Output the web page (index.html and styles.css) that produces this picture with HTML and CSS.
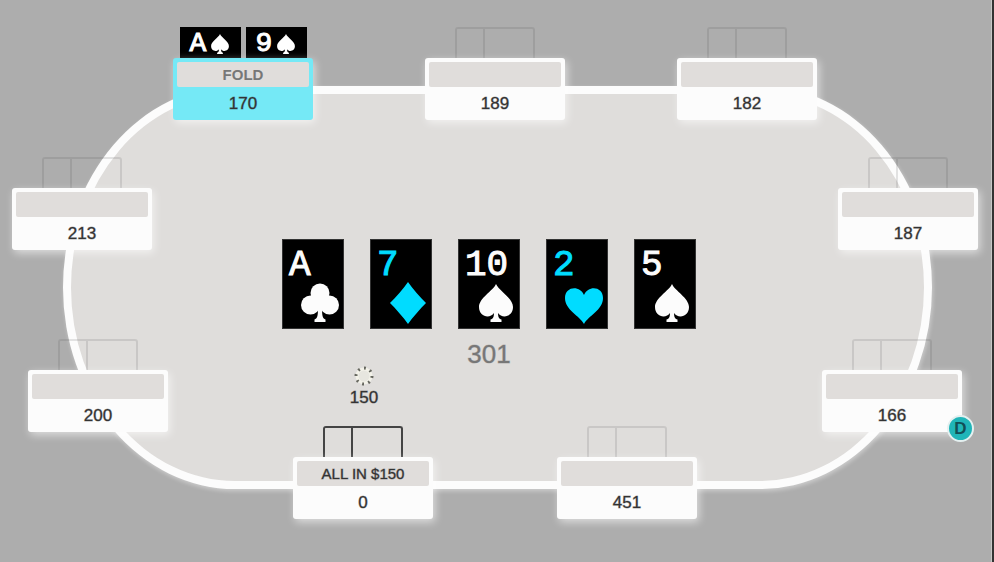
FILE: index.html
```html
<!DOCTYPE html>
<html lang="en">
<head>
<meta charset="utf-8">
<title>Poker table</title>
<link rel="stylesheet" href="styles.css">
</head>
<body>
<svg class="defs" aria-hidden="true">
  <symbol id="spade" viewBox="0 0 38 42"><path d="M19 2C16 9 2 16 2 25c0 10 11 12 15 6-.2 4-.8 6-3.500 6.500V40h11v-2.500C21.800 37 21.200 35 21 31c4 6 15 4 15-6C36 16 22 9 19 2z"/></symbol>
  <symbol id="club" viewBox="0 0 38 42"><circle cx="19" cy="11" r="9.500"/><circle cx="9.500" cy="23" r="9.500"/><circle cx="28.500" cy="23" r="9.500"/><path d="M14 15h10l-3 13c.2 6 .8 8.500 3.500 9.500V40h-11v-2.500c2.700-1 3.300-3.500 3.500-9.500z"/></symbol>
  <symbol id="diamond" viewBox="0 0 38 42"><path d="M19 0C24 7 31 15 37 21 31 27 24 35 19 42 14 35 7 27 1 21 7 15 14 7 19 0z"/></symbol>
  <symbol id="heart" viewBox="0 0 38 42"><path d="M19 42C15 34 0 28 0 16 0 4 15 3 19 13 23 3 38 4 38 16c0 12-15 18-19 26z"/></symbol>
</svg>
<main class="stage">
  <div class="felt"></div>

  <section class="row row-top">
    <article class="seat seat-active">
      <div class="hand">
        <div class="hole"><span>A</span><svg role="img" aria-label="spades"><use href="#spade"/></svg></div>
        <div class="hole"><span>9</span><svg role="img" aria-label="spades"><use href="#spade"/></svg></div>
      </div>
      <div class="panel"><div class="action">FOLD</div><div class="stack">170</div></div>
    </article>
    <article class="seat"><div class="slot"></div><div class="panel"><div class="action"></div><div class="stack">189</div></div></article>
    <article class="seat"><div class="slot"></div><div class="panel"><div class="action"></div><div class="stack">182</div></div></article>
  </section>

  <section class="middle">
    <div class="side side-left">
      <article class="seat"><div class="slot"></div><div class="panel"><div class="action"></div><div class="stack">213</div></div></article>
      <article class="seat"><div class="slot"></div><div class="panel"><div class="action"></div><div class="stack">200</div></div></article>
    </div>
    <div class="center">
      <div class="board">
        <div class="card"><span class="rank">A</span><svg class="suit" role="img" aria-label="clubs"><use href="#club"/></svg></div>
        <div class="card cyan"><span class="rank">7</span><svg class="suit" role="img" aria-label="diamonds"><use href="#diamond"/></svg></div>
        <div class="card"><span class="rank">10</span><svg class="suit" role="img" aria-label="spades"><use href="#spade"/></svg></div>
        <div class="card cyan"><span class="rank">2</span><svg class="suit" role="img" aria-label="hearts"><use href="#heart"/></svg></div>
        <div class="card"><span class="rank">5</span><svg class="suit" role="img" aria-label="spades"><use href="#spade"/></svg></div>
      </div>
      <div class="pot">301</div>
      <div class="bet">
        <svg class="chip" viewBox="0 0 20 20" aria-hidden="true"><circle class="chip-rim" cx="10" cy="10" r="7"/><circle class="chip-marks" cx="10" cy="10" r="8" pathLength="80"/></svg>
        <span>150</span>
      </div>
    </div>
    <div class="side side-right">
      <article class="seat"><div class="slot"></div><div class="panel"><div class="action"></div><div class="stack">187</div></div></article>
      <article class="seat"><div class="slot"></div><div class="panel"><div class="action"></div><div class="stack">166</div><span class="dealer">D</span></div></article>
    </div>
  </section>

  <section class="row row-bottom">
    <article class="seat seat-in"><div class="slot"></div><div class="panel"><div class="action">ALL IN $150</div><div class="stack">0</div></div></article>
    <article class="seat"><div class="slot"></div><div class="panel"><div class="action"></div><div class="stack">451</div></div></article>
  </section>
</main>
</body>
</html>
```
FILE: styles.css
```css
* { box-sizing: border-box; }

body {
  margin: 0;
  background: #adadad;
  color: #333;
  font-family: "Liberation Sans", Arial, sans-serif;
}

.defs { position: absolute; width: 0; height: 0; }

.stage {
  position: relative;
  min-height: 100vh;
  padding: 27px 14px 0 12px;
  border-right: 2px solid #333;
  box-shadow: inset -1px 0 #c8c8c8;
}

/* Table surface, drawn behind the seats */
.felt {
  position: absolute;
  top: 86px;
  left: 63px;
  right: 60px;
  height: 403px;
  border: 8px solid #fcfcfc;
  border-radius: 172px / 50%;
  background: #dfdddb;
  box-shadow: 1px 2px 4px rgba(255, 255, 255, 0.4);
}

.row, .middle { position: relative; display: flex; }
.row { justify-content: center; }
.row-top { gap: 112px; }
.row-bottom { gap: 124px; margin-top: -6px; }

.middle { justify-content: space-between; margin-top: 37px; }
.side { display: flex; flex-direction: column; gap: 89px; width: 156px; }
.side-left .seat:last-child { align-self: flex-end; }
.side-right .seat:first-child { align-self: flex-end; }

.seat { width: 140px; }

.slot {
  width: 80px;
  height: 31px;
  margin: 0 auto;
  border: 2px solid rgba(70, 70, 70, 0.14);
  border-bottom: 0;
  border-radius: 3px 3px 0 0;
}
.slot::before {
  content: "";
  display: block;
  width: 26px;
  height: 100%;
  border-right: 2px solid rgba(70, 70, 70, 0.14);
}
.seat-in .slot, .seat-in .slot::before { border-color: #444; }

.panel {
  position: relative;
  height: 62px;
  padding: 4px 4px 0;
  border-radius: 3px;
  background: #fcfcfc;
  box-shadow: 2px 3px 8px rgba(255, 255, 255, 0.6);
  text-align: center;
}
.action {
  height: 25px;
  border-radius: 2px;
  background: #e0dddb;
  font-size: 15px;
  line-height: 26px;
  -webkit-text-stroke: 1px rgba(51, 51, 51, 0.4);
}
.stack, .bet span {
  font-size: 17px;
  line-height: 34px;
  -webkit-text-stroke: 1px rgba(51, 51, 51, 0.4);
}

.seat-active .panel { background: #75e9f6; }
.seat-active .action { color: #777; font-weight: bold; -webkit-text-stroke: 0; }

.hand { display: flex; justify-content: center; gap: 5px; height: 31px; }
.hole {
  display: flex;
  align-items: center;
  justify-content: center;
  gap: 4px;
  width: 61px;
  padding-top: 3px;
  background: #000;
  color: #fff;
}
.hole span {
  font: 28px/28px "Liberation Mono", monospace;
  -webkit-text-stroke: 1px currentColor;
}
.hole svg { width: 20px; height: 22px; fill: #fff; }

.center {
  display: flex;
  flex-direction: column;
  flex: 1;
  align-items: center;
  margin-right: 12px;
  padding-top: 82px;
}
.board { display: flex; gap: 26px; }
.card {
  display: flex;
  flex-direction: column;
  justify-content: space-between;
  width: 62px;
  height: 90px;
  padding: 10px 4px 6px 6px;
  border: 1px solid #333;
  background: #000;
  color: #fcfcfc;
}
.cyan { color: #00dcff; }
.rank {
  font: 36px/32px "Liberation Mono", monospace;
  -webkit-text-stroke: 1px currentColor;
}
.suit {
  align-self: flex-end;
  flex: none;
  width: 38px;
  height: 42px;
  fill: currentColor;
}

.pot { margin-top: 13px; color: #777; font-size: 26px; line-height: 24px; -webkit-text-stroke: 1px rgba(119, 119, 119, 0.4); }

.bet {
  display: flex;
  flex-direction: column;
  align-items: center;
  align-self: flex-start;
  width: 140px;
  margin-left: 126px;
}
.bet span { line-height: 24px; }
.chip { width: 20px; height: 20px; fill: none; }
.chip-rim { fill: #e7e6df; stroke: #f3f2e9; stroke-width: 3; }
.chip-marks { stroke: #66675f; stroke-width: 3; stroke-dasharray: 3 7; }

.dealer {
  position: absolute;
  top: 45px;
  right: -12px;
  width: 27px;
  height: 27px;
  border: 2px solid #e4f0f0;
  border-radius: 50%;
  background: #20b5b8;
  color: #124e55;
  font-size: 17px;
  font-weight: bold;
  line-height: 23px;
}
```
